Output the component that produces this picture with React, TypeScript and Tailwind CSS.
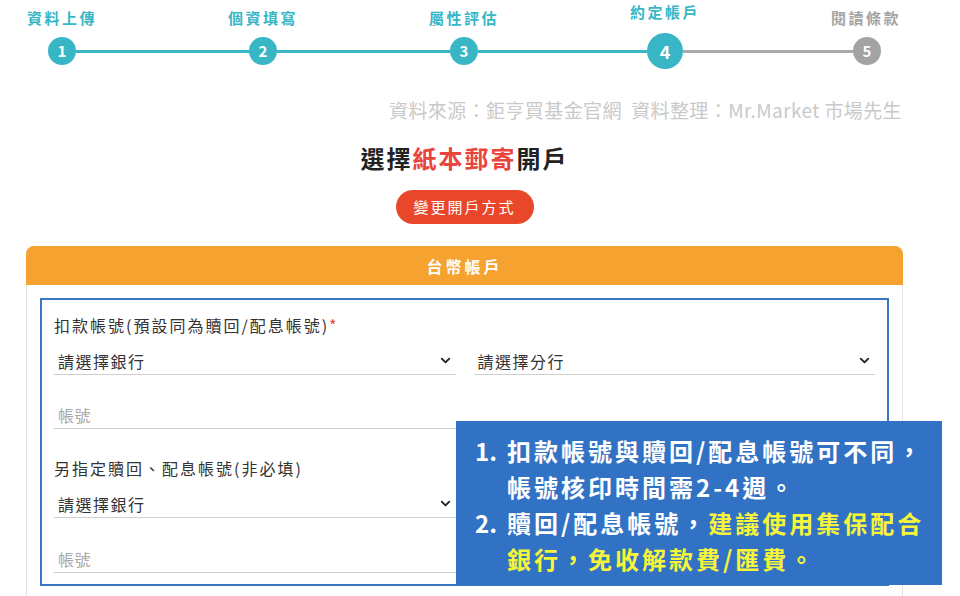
import { ChevronDown } from 'lucide-react'

const font = { fontFamily: '"Noto Sans CJK TC", "Noto Sans", sans-serif' }

const steps = [
  { n: 1, label: '資料上傳', done: true },
  { n: 2, label: '個資填寫', done: true },
  { n: 3, label: '屬性評估', done: true },
  { n: 4, label: '約定帳戶', done: true },
  { n: 5, label: '閱讀條款', done: false },
]

function Stepper() {
  return (
    <div>
      {/* labels */}
      <div className="flex h-[28px] items-end gap-[81px] pl-[2px]">
        {steps.map(s => (
          <div
            key={s.n}
            className={
              'w-[120px] text-center text-[15px] font-bold leading-[20px] tracking-[2.5px] ' +
              (s.n === 4 ? 'mb-[6px] text-[#38b6c6]' : s.done ? 'text-[#38b6c6]' : 'text-[#a3a3a6]')
            }
          >
            {s.label}
          </div>
        ))}
      </div>

      {/* circles + connectors */}
      <div className="flex h-[41px] items-center pl-[48px] pt-[5px]">
        <Dot n={1} />
        <div className="h-[3px] w-[173px] bg-[#38b6c6]" />
        <Dot n={2} />
        <div className="h-[3px] w-[173px] bg-[#38b6c6]" />
        <Dot n={3} />
        <div className="h-[3px] w-[169px] bg-[#38b6c6]" />
        <div className="flex h-[36px] w-[36px] items-center justify-center rounded-full bg-[#38b6c6] text-[18px] font-bold text-white">
          4
        </div>
        <div className="h-[3px] w-[170px] bg-[#aaaaac]" />
        <div className="flex h-[28px] w-[28px] items-center justify-center rounded-full bg-[#a3a3a6] text-[15px] font-bold text-white">
          5
        </div>
      </div>
    </div>
  )
}

function Dot({ n }: { n: number }) {
  return (
    <div className="flex h-[28px] w-[28px] items-center justify-center rounded-full bg-[#38b6c6] text-[15px] font-bold text-white">
      {n}
    </div>
  )
}

function SelectBox({ text }: { text: string }) {
  return (
    <div className="flex h-[28px] items-center justify-between border-b border-[#cfcfcf] pl-[4px] pr-[3px]">
      <span className="text-[16px] tracking-[1.5px] text-[#333]">{text}</span>
      <ChevronDown size={15} strokeWidth={3} className="text-[#222]" />
    </div>
  )
}

function AccountInput() {
  return (
    <div className="flex h-[28px] items-center border-b border-[#cfcfcf] pl-[4px]">
      <span className="text-[16px] tracking-[0.5px] text-[#a8a8a8]">帳號</span>
    </div>
  )
}

export default function App() {
  return (
    <div className="relative h-[596px] w-[960px] overflow-hidden bg-white" style={font}>
      <Stepper />

      <div className="mt-[27px] pr-[58px] text-right text-[19px] leading-[28px] tracking-[0.4px] text-[#c9c9c9]">
        資料來源：鉅亨買基金官網&nbsp;&nbsp;資料整理：Mr.Market 市場先生
      </div>

      <div className="pl-[26px] pr-[57px]">
        <h1 className="mt-[17px] text-center text-[24px] font-bold leading-[34px] tracking-[2px] text-[#222]">
          選擇<span className="text-[#e8463c]">紙本郵寄</span>開戶
        </h1>

        <div className="mt-[15px] flex justify-center">
          <button className="h-[34px] w-[138px] rounded-full bg-[#e8472a] text-[15px] tracking-[2px] text-white">
            變更開戶方式
          </button>
        </div>

        <div className="mt-[22px]">
          <div className="flex h-[39px] items-center justify-center rounded-t-[8px] bg-[#f6a231] text-[16px] font-bold tracking-[3px] text-white">
            台幣帳戶
          </div>
          <div className="border-x border-[#e4e4e4] px-[13px] pb-[20px] pt-[13px]">
            <div className="border-2 border-[#3b76c4] px-[12px] pb-[11px] pt-[14px]">
              <div className="text-[16px] leading-[22px] tracking-[2px] text-[#333]">
                扣款帳號(預設同為贖回/配息帳號)<span className="text-[#e8463c]">*</span>
              </div>
              <div className="mt-[11px] grid grid-cols-2 gap-[18px]">
                <SelectBox text="請選擇銀行" />
                <SelectBox text="請選擇分行" />
              </div>
              <div className="mt-[26px] grid grid-cols-2 gap-[18px]">
                <AccountInput />
                <div className="border-b border-[#cfcfcf]" />
              </div>

              <div className="mt-[28px] text-[16px] leading-[22px] tracking-[2px] text-[#333]">
                另指定贖回、配息帳號(非必填)
              </div>
              <div className="mt-[11px] grid grid-cols-2 gap-[18px]">
                <SelectBox text="請選擇銀行" />
                <div className="border-b border-[#cfcfcf]" />
              </div>
              <div className="mt-[27px] grid grid-cols-2 gap-[18px]">
                <AccountInput />
                <div className="border-b border-[#cfcfcf]" />
              </div>
            </div>
          </div>
        </div>
      </div>

      {/* annotation overlay */}
      <div className="absolute left-[456px] top-[421px] h-[164px] w-[486px] bg-[#3272c4] pl-[19px] pt-[12px] text-[24px] font-bold leading-[36px] tracking-[3px] text-white">
        <div className="flex">
          <span className="w-[32px] shrink-0 tracking-normal">1.</span>
          <div className="whitespace-nowrap">
            <div>扣款帳號與贖回/配息帳號可不同，</div>
            <div>帳號核印時間需2-4週。</div>
          </div>
        </div>
        <div className="flex">
          <span className="w-[32px] shrink-0 tracking-normal">2.</span>
          <div className="whitespace-nowrap">
            <div>
              贖回/配息帳號，<span className="text-[#f7f53a]">建議使用集保配合</span>
            </div>
            <div className="text-[#f7f53a]">銀行，免收解款費/匯費。</div>
          </div>
        </div>
      </div>
    </div>
  )
}
